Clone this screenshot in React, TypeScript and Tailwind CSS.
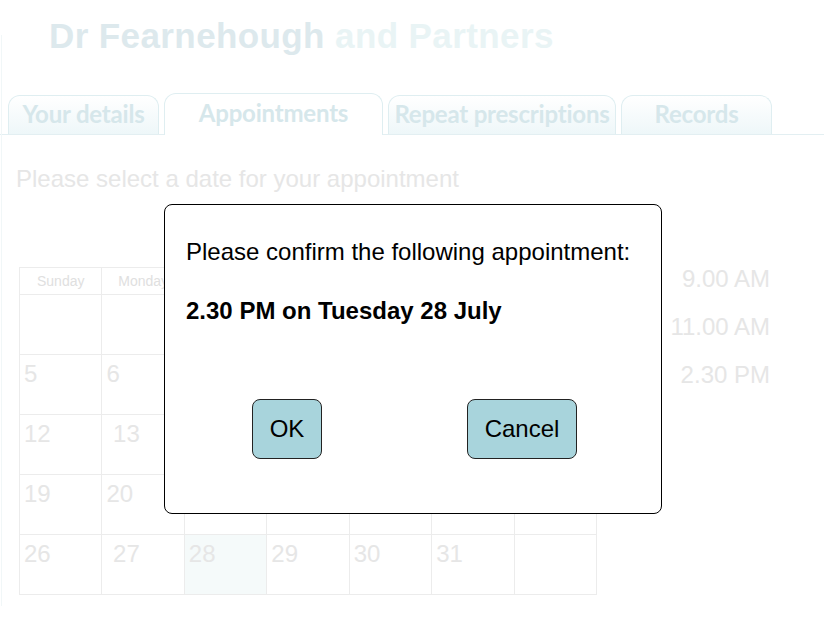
const tabs = [
  { label: 'Your details', width: 'w-[151px]', active: false },
  { label: 'Appointments', width: 'w-[219px]', active: true },
  { label: 'Repeat prescriptions', width: 'w-[228px]', active: false },
  { label: 'Records', width: 'w-[151px]', active: false },
];

const days = ['Sunday', 'Monday', 'Tuesday', 'Wednesday', 'Thursday', 'Friday', 'Saturday'];

// July starting on Wednesday; blanks before the 1st
const weeks: string[][] = [
  ['', '', '', '1', '2', '3', '4'],
  ['5', '6', '7', '8', '9', '10', '11'],
  ['12', ' 13', '14', '15', '16', '17', '18'],
  ['19', '20', '21', '22', '23', '24', '25'],
  ['26', ' 27', '28', '29', '30', '31', ''],
];

const times = ['9.00 AM', '11.00 AM', '2.30 PM'];

export default function App() {
  return (
    <div className="relative w-[824px] h-[618px] overflow-hidden bg-white font-['Liberation_Sans',Arial,sans-serif]">
      {/* faint page frame */}
      <div className="absolute left-px top-[35px] bottom-[12px] w-px bg-[#f1f7f8]" />

      {/* Header */}
      <h1 className="pl-[49px] pt-[15px] text-[35px] leading-[42px] font-bold tracking-[0.4px]">
        <span className="text-[#dde9ed]">Dr Fearnehough</span>{' '}
        <span className="text-[#e9f4f5]">and Partners</span>
      </h1>

      {/* Tabs */}
      <div className="mt-[37px] flex items-end gap-[5px] pl-[8px] border-b border-[#e3eff2] h-[41px]">
        {tabs.map((tab) => (
          <div
            key={tab.label}
            className={`${tab.width} flex items-center justify-center rounded-t-[12px] border border-b-0 border-[#dfeef1] font-['Lato',sans-serif] font-bold text-[24px] tracking-[-0.2px] whitespace-nowrap text-[#d6e7eb] ${
              tab.active
                ? 'h-[42px] -mb-px bg-white pb-[4px]'
                : 'h-[39px] bg-gradient-to-b from-white to-[#eef7f9] pb-[2px]'
            }`}
          >
            {tab.label}
          </div>
        ))}
      </div>

      {/* Body */}
      <div className="pl-[16px] pt-[30px]">
        <p className="text-[24px] leading-[28px] text-[#e6e6e6]">Please select a date for your appointment</p>

        <div className="mt-[74px] flex items-start">
          {/* Calendar */}
          <div className="ml-[3px] w-[578px] border-l border-t border-[#ececec]">
            <div className="grid grid-cols-7">
              {days.map((d) => (
                <div
                  key={d}
                  className="h-[27px] border-r border-b border-[#ececec] flex items-center justify-center text-[14px] text-[#e0e0e0] overflow-hidden whitespace-nowrap"
                >
                  {d}
                </div>
              ))}
            </div>
            {weeks.map((week, wi) => (
              <div key={wi} className="grid grid-cols-7">
                {week.map((n, di) => (
                  <div
                    key={di}
                    className={`h-[60px] border-r border-b border-[#ececec] pl-[4px] pt-[5px] text-[24px] leading-[28px] text-[#e6e6e6] whitespace-pre ${
                      n === '28' ? 'bg-[#f5fafa]' : ''
                    }`}
                  >
                    {n}
                  </div>
                ))}
              </div>
            ))}
          </div>

          {/* Available times */}
          <div className="ml-auto mr-[54px] mt-[-2px] flex flex-col items-end gap-[20px]">
            {times.map((t) => (
              <span key={t} className="text-[24px] leading-[28px] text-[#e6e6e6]">
                {t}
              </span>
            ))}
          </div>
        </div>
      </div>

      {/* Confirmation dialog */}
      <div className="absolute left-[164px] top-[204px] w-[498px] h-[310px] rounded-[8px] border border-black bg-white px-[21px] pt-[33px]">
        <p className="text-[24px] leading-[28px] text-black whitespace-nowrap">Please confirm the following appointment:</p>
        <p className="mt-[31px] text-[24px] leading-[28px] font-bold text-black">2.30 PM on Tuesday 28 July</p>
        <div className="mt-[74px] flex">
          <button className="ml-[66px] w-[70px] h-[60px] rounded-[8px] border border-[#222] bg-[#a8d4dc] text-[24px] text-black">
            OK
          </button>
          <button className="ml-[145px] w-[110px] h-[60px] rounded-[8px] border border-[#222] bg-[#a8d4dc] text-[24px] text-black">
            Cancel
          </button>
        </div>
      </div>
    </div>
  );
}
